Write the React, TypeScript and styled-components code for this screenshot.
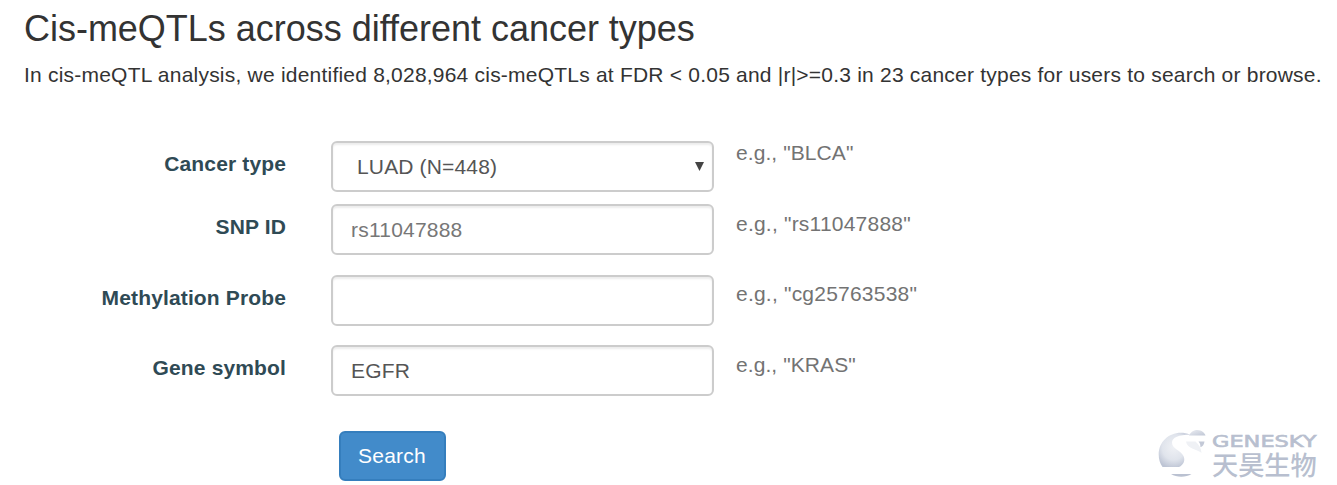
import React from "react";
import styled, { createGlobalStyle } from "styled-components";

const GlobalStyle = createGlobalStyle`
  * { box-sizing: border-box; }
  body {
    margin: 0;
    background: #fff;
    overflow: hidden;
    color: #333;
    font-family: "Liberation Sans", Arial, "Noto Sans CJK SC", sans-serif;
    font-size: 21px;
    line-height: 30px;
    letter-spacing: 0.215px;
  }
`;

const Page = styled.main`
  position: relative;
  width: 1337px;
  height: 485px;
  overflow: hidden;
  padding-top: 9px;
`;

const Title = styled.h1`
  margin: 0 0 11px 24px;
  font-size: 36px;
  font-weight: 400;
  line-height: 40px;
  letter-spacing: -0.02px;
`;

const Intro = styled.p`
  margin: 0 0 51px 24px;
  white-space: nowrap;
`;

const Form = styled.form`
  display: flex;
  flex-direction: column;
`;

const Row = styled.div<{ $gap: number }>`
  display: grid;
  grid-template-columns: 286px 383px 1fr;
  column-gap: 0;
  height: 51px;
  margin-bottom: ${(p) => p.$gap}px;
`;

const Label = styled.label`
  padding-top: 8px;
  text-align: right;
  font-weight: 700;
  letter-spacing: 0.14px;
  color: #2f4a55;
`;

const Field = styled.div`
  position: relative;
  margin-left: 45px;
  width: 383px;
  height: 51px;
`;

const Input = styled.input`
  display: block;
  width: 100%;
  height: 51px;
  padding: 0 18px;
  border: 2px solid #ccc;
  border-radius: 6px;
  background: #fff;
  box-shadow: inset 0 2px 2px rgba(0, 0, 0, 0.075);
  color: #555;
  font: inherit;
  letter-spacing: inherit;
  outline: none;
  &::placeholder {
    color: #777;
    opacity: 1;
  }
`;

const Select = styled.select`
  display: block;
  width: 100%;
  height: 51px;
  padding: 0 24px;
  border: 2px solid #ccc;
  border-radius: 6px;
  background: #fff;
  box-shadow: inset 0 2px 2px rgba(0, 0, 0, 0.075);
  color: #555;
  font: inherit;
  letter-spacing: 0.15px;
  appearance: none;
  outline: none;
`;

const Arrow = styled.svg`
  position: absolute;
  right: 10px;
  top: 21px;
  width: 9px;
  height: 9px;
  pointer-events: none;
`;

const Hint = styled.span<{ $top: number; $tight?: boolean }>`
  margin-left: 67px;
  margin-top: ${(p) => p.$top}px;
  letter-spacing: ${(p) => (p.$tight ? "0.08px" : "inherit")};
  color: #737373;
`;

const SearchButton = styled.button`
  width: 107px;
  height: 50px;
  margin-left: 339px;
  padding: 0 1px 0 0;
  border: 2px solid #357ebd;
  border-radius: 6px;
  background: #428bca;
  color: #fff;
  font: inherit;
  letter-spacing: inherit;
`;

const Brand = styled.div`
  position: absolute;
  right: 12px;
  bottom: 2px;
  display: flex;
  width: 174px;
  height: 58px;
`;

const Emblem = styled.svg`
  width: 59px;
  height: 58px;
`;

const Wordmark = styled.div`
  display: flex;
  flex-direction: column;
  width: 115px;
  padding-top: 5px;
`;

const LatinName = styled.svg`
  width: 115px;
  height: 20px;
  overflow: visible;
`;

const ChineseName = styled.span`
  margin-left: 2px;
  font-family: "Noto Sans CJK SC", sans-serif;
  font-size: 26.2px;
  font-weight: 500;
  line-height: 29px;
  letter-spacing: 0;
  color: #b8bfcf;
  white-space: nowrap;
`;

const rows = [
  { label: "Cancer type", hint: "BLCA", gap: 12, hintTop: -3, tight: true, options: ["LUAD (N=448)"] },
  { label: "SNP ID", hint: "rs11047888", gap: 20, hintTop: 5, placeholder: "rs11047888" },
  { label: "Methylation Probe", hint: "cg25763538", gap: 19, hintTop: 4 },
  { label: "Gene symbol", hint: "KRAS", gap: 35, hintTop: 5, tight: true, value: "EGFR" },
];

function Watermark() {
  return (
    <Brand>
      <Emblem viewBox="1151 425 59 58">
        <defs>
          <radialGradient id="sphere" cx="0.48" cy="0.42" r="0.62">
            <stop offset="0" stopColor="#eff1f5" />
            <stop offset="0.6" stopColor="#e0e4ec" />
            <stop offset="1" stopColor="#bdc4d4" />
          </radialGradient>
          <linearGradient id="moon" x1="0" y1="0" x2="1" y2="1">
            <stop offset="0" stopColor="#eceef3" />
            <stop offset="1" stopColor="#bfc6d5" />
          </linearGradient>
        </defs>
        <path d="M1189 435.500C1191 431.500 1194 430 1197.500 430C1201.500 430.200 1204.500 432.500 1205.500 435.500Z" fill="url(#moon)" />
        <path d="M1198.500 441.500H1204.500C1204 445 1202.500 446.500 1200.500 447.300C1200.500 445 1200 443 1198.500 441.500Z" fill="#c3c9d7" />
        <path
          d="M1190 434.500C1174 428.500 1158.700 439 1158.700 454.500C1158.700 459.500 1160 463.500 1162.500 467H1179C1183.500 465 1185.500 460.500 1183.500 456C1180.500 450 1172 449 1172 442.500C1172 437.500 1179 434.800 1190 434.500Z"
          fill="url(#sphere)"
        />
        <path
          d="M1186 441.500H1195.500C1199 444.500 1201.300 448.500 1201.500 453C1198 449.500 1187 449 1186 441.500Z"
          fill="#eff1f5"
        />
        <path d="M1171 474H1191.500C1186 477.700 1176.500 477.700 1171 474Z" fill="#bac1d1" />
      </Emblem>
      <Wordmark>
        <LatinName viewBox="0 0 115 20">
          <text
            x="2"
            y="17"
            fontFamily="'DejaVu Sans', sans-serif"
            fontSize="15.200"
            fill="#b8bfcf"
            stroke="#b8bfcf"
            strokeWidth="0.6"
            letterSpacing="0"
            textLength="104.500"
            lengthAdjust="spacingAndGlyphs"
          >
            GENESKY
          </text>
        </LatinName>
        <ChineseName>天昊生物</ChineseName>
      </Wordmark>
    </Brand>
  );
}

export default function App() {
  return (
    <>
      <GlobalStyle />
      <Page>
        <Title>Cis-meQTLs across different cancer types</Title>
        <Intro>
          In cis-meQTL analysis, we identified 8,028,964 cis-meQTLs at FDR &lt; 0.05 and |r|&gt;=0.3 in 23 cancer
          types for users to search or browse.
        </Intro>
        <Form onSubmit={(e) => e.preventDefault()}>
          {rows.map((row, i) => (
            <Row key={row.label} $gap={row.gap}>
              <Label htmlFor={`field-${i}`}>{row.label}</Label>
              <Field>
                {row.options ? (
                  <>
                    <Select id={`field-${i}`}>
                      {row.options.map((o) => (
                        <option key={o}>{o}</option>
                      ))}
                    </Select>
                    <Arrow viewBox="0 0 9 9">
                      <path d="M0 0H9L4.500 9Z" fill="#444" />
                    </Arrow>
                  </>
                ) : (
                  <Input id={`field-${i}`} placeholder={row.placeholder} defaultValue={row.value} />
                )}
              </Field>
              <Hint $top={row.hintTop} $tight={row.tight}>{`e.g., "${row.hint}"`}</Hint>
            </Row>
          ))}
          <SearchButton type="submit">Search</SearchButton>
        </Form>
        <Watermark />
      </Page>
    </>
  );
}
